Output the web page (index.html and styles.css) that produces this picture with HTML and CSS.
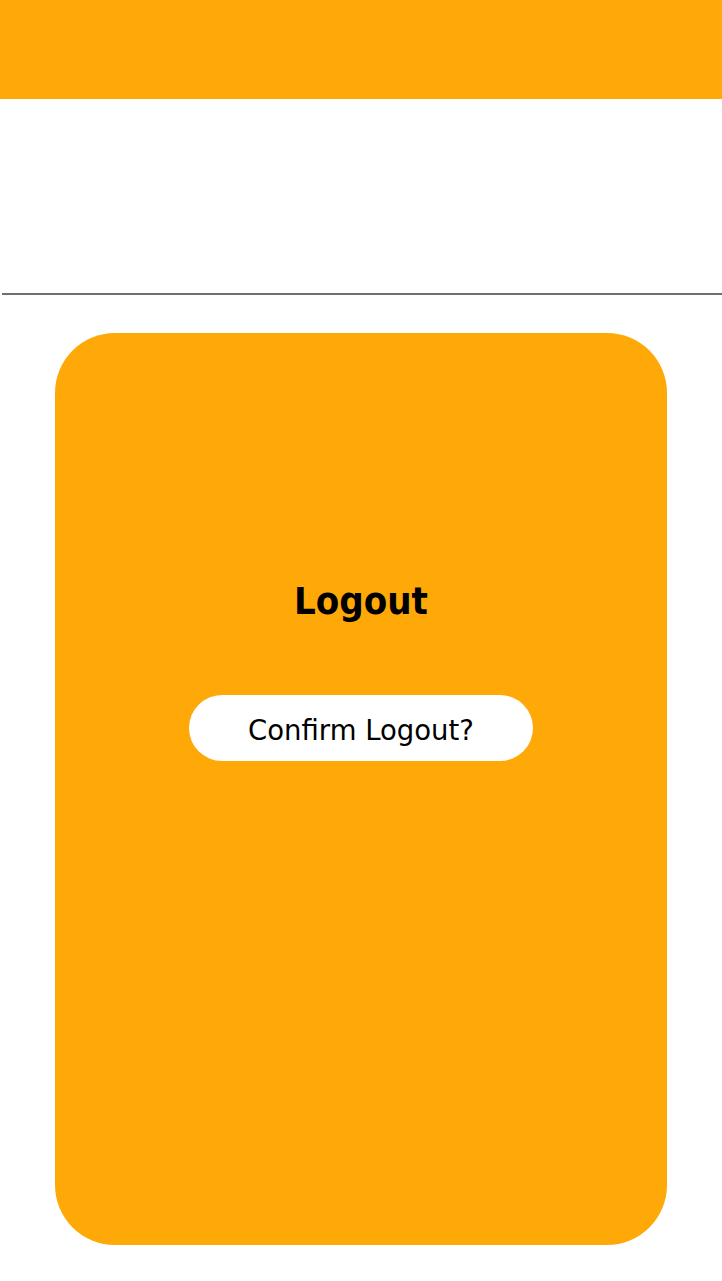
FILE: index.html
```html
<!DOCTYPE html>
<html>
<head>
<meta charset="utf-8">
<link rel="stylesheet" href="styles.css">
</head>
<body>
<header class="topbar"></header>
<div class="spacer"></div>
<hr class="divider">
<main class="card">
  <h1 class="title">Logout</h1>
  <button class="confirm">Confirm Logout?</button>
</main>
</body>
</html>
```
FILE: styles.css
```css
html, body {
  margin: 0;
  padding: 0;
  background: #ffffff;
  font-family: "DejaVu Sans", sans-serif;
}
.topbar {
  height: 99px;
  background: #ffa908;
}
.spacer {
  height: 194px;
}
.divider {
  margin: 0 0 0 2px;
  border: none;
  height: 2px;
  background: #6f6f6f;
}
.card {
  box-sizing: border-box;
  width: 612px;
  height: 912px;
  margin: 38px auto 0;
  background: #ffa908;
  border-radius: 60px;
  display: flex;
  flex-direction: column;
  align-items: center;
  padding-top: 244px;
}
.title {
  margin: 0;
  font-family: "DejaVu Sans Condensed", "DejaVu Sans", sans-serif;
  font-stretch: condensed;
  font-size: 38px;
  line-height: 48px;
  font-weight: bold;
  color: #000;
}
.confirm {
  margin-top: 70px;
  width: 344px;
  height: 66px;
  border: none;
  border-radius: 33px;
  background: #ffffff;
  font-family: "DejaVu Sans", sans-serif;
  font-size: 27.5px;
  color: #000;
  padding: 3px 0 0;
}
```
